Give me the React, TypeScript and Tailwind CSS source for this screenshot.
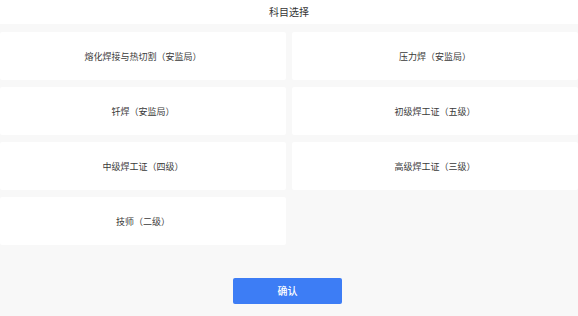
import React from "react";

const items = [
  "熔化焊接与热切割（安监局）",
  "压力焊（安监局）",
  "钎焊（安监局）",
  "初级焊工证（五级）",
  "中级焊工证（四级）",
  "高级焊工证（三级）",
  "技师（二级）",
];

export default function App() {
  return (
    <div
      className="min-h-screen w-full bg-[#f8f8f8] text-[#333333]"
      style={{ fontFamily: '"Noto Sans CJK SC", "Noto Sans", sans-serif' }}
    >
      <div className="h-[24px] bg-white flex items-center justify-center text-[10px] leading-none">
        科目选择
      </div>
      <div className="grid grid-cols-2 gap-x-[6px] gap-y-[7px] pt-[8px]">
        {items.map((t) => (
          <div
            key={t}
            className="h-[48px] bg-white rounded-[2px] flex items-center justify-center text-[9px] leading-none text-[#3a3a3a]"
          >
            {t}
          </div>
        ))}
      </div>
      <div className="flex justify-center pt-[33px] pr-[3px]">
        <button className="w-[109px] h-[26px] rounded-[2px] bg-[#3d7df5] text-white text-[10px] font-medium leading-none flex items-center justify-center">
          确认
        </button>
      </div>
    </div>
  );
}
